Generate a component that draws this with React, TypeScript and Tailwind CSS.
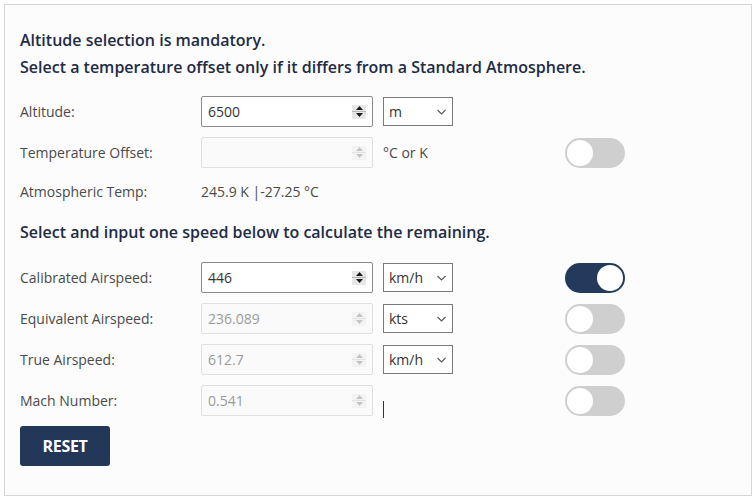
import React from "react";

const font = { fontFamily: '"Open Sans", "Noto Sans", sans-serif' };

function Spinner({ disabled }: { disabled?: boolean }) {
	const arrow = disabled ? "#c4c4c4" : "#1a1a1a";
	return (
		<div
			className={`absolute right-[6px] top-1/2 flex h-[14px] w-[14px] -translate-y-1/2 flex-col ${disabled ? "bg-[#f3f3f3]" : "bg-[#e6e6e6]"}`}
		>
			<div className="flex flex-1 items-center justify-center">
				<svg width="7" height="4" viewBox="0 0 7 4">
					<path d="M0 4 L3.5 0 L7 4 Z" fill={arrow} />
				</svg>
			</div>
			<div className={`h-px ${disabled ? "bg-[#e2e2e2]" : "bg-[#b5b5b5]"}`} />
			<div className="flex flex-1 items-center justify-center">
				<svg width="7" height="4" viewBox="0 0 7 4">
					<path d="M0 0 L3.5 4 L7 0 Z" fill={arrow} />
				</svg>
			</div>
		</div>
	);
}

function NumberBox({ value, disabled }: { value: string; disabled?: boolean }) {
	return (
		<div
			className={`relative flex h-[31px] w-[172px] items-center rounded-[2px] border pl-[6px] text-[14px] ${disabled ? "border-[#e0e0e0] bg-[#fafafa] text-[#9a9a9a]" : "border-[#8a8a8a] bg-white text-[#333]"}`}
		>
			{value}
			<Spinner disabled={disabled} />
		</div>
	);
}

function UnitSelect({ value }: { value: string }) {
	return (
		<div className="relative flex h-[29px] w-[70px] items-center border border-[#7a7a7a] bg-white pl-[5px] text-[14px] text-[#333]">
			{value}
			<svg
				className="absolute right-[6px] top-1/2 -translate-y-1/2"
				width="9"
				height="6"
				viewBox="0 0 9 6"
			>
				<path d="M0.5 1 L4.5 5 L8.5 1" fill="none" stroke="#555" strokeWidth="1.1" />
			</svg>
		</div>
	);
}

function Toggle({ on }: { on?: boolean }) {
	return (
		<div
			className={`flex h-[30px] w-[60px] items-center rounded-full p-[2px] ${on ? "justify-end bg-[#233a5c]" : "justify-start bg-[#cfcfcf]"}`}
		>
			<div className="h-[26px] w-[26px] rounded-full bg-white" />
		</div>
	);
}

function Row({
	label,
	children,
	unit,
	toggle,
}: {
	label: string;
	children: React.ReactNode;
	unit?: React.ReactNode;
	toggle?: React.ReactNode;
}) {
	return (
		<div className="flex h-[31px] items-center">
			<div className="w-[181px] text-[14px] text-[#4a4a4a]">{label}</div>
			<div className="w-[172px]">{children}</div>
			<div className="ml-[10px] flex w-[70px] items-center">{unit}</div>
			<div className="ml-[112px]">{toggle}</div>
		</div>
	);
}

export default function App() {
	return (
		<div className="min-h-[500px] bg-white p-[4px]" style={font}>
			<div className="h-[492px] w-[748px] border border-[#d6d6d6] bg-[#fcfcfc] px-[15px] pt-[22px]">
				<p className="text-[16px] font-semibold leading-[27px] text-[#1e2b45]">
					Altitude selection is mandatory.
				</p>
				<p className="text-[16px] font-semibold leading-[27px] text-[#1e2b45]">
					Select a temperature offset only if it differs from a Standard Atmosphere.
				</p>

				<div className="mt-[15px] flex flex-col gap-[10px]">
					<Row label="Altitude:" unit={<UnitSelect value="m" />}>
						<NumberBox value="6500" />
					</Row>
					<Row
						label="Temperature Offset:"
						unit={<span className="text-[14px] text-[#4a4a4a]">°C or K</span>}
						toggle={<Toggle />}
					>
						<NumberBox value="" disabled />
					</Row>
					<div className="flex h-[26px] items-center text-[14px] text-[#4a4a4a]">
						<div className="w-[181px]">Atmospheric Temp:</div>
						<div>245.9 K |-27.25 °C</div>
					</div>
				</div>

				<p className="mt-[15px] text-[16px] font-semibold leading-[27px] text-[#1e2b45]">
					Select and input one speed below to calculate the remaining.
				</p>

				<div className="mt-[16px] flex flex-col gap-[10px]">
					<Row label="Calibrated Airspeed:" unit={<UnitSelect value="km/h" />} toggle={<Toggle on />}>
						<NumberBox value="446" />
					</Row>
					<Row label="Equivalent Airspeed:" unit={<UnitSelect value="kts" />} toggle={<Toggle />}>
						<NumberBox value="236.089" disabled />
					</Row>
					<Row label="True Airspeed:" unit={<UnitSelect value="km/h" />} toggle={<Toggle />}>
						<NumberBox value="612.7" disabled />
					</Row>
					<Row
						label="Mach Number:"
						unit={<div className="mt-[18px] h-[17px] w-px bg-[#333]" />}
						toggle={<Toggle />}
					>
						<NumberBox value="0.541" disabled />
					</Row>
				</div>

				<button className="mt-[10px] h-[40px] w-[90px] rounded-[3px] bg-[#233759] text-[16px] font-bold tracking-[-0.3px] text-white">
					RESET
				</button>
			</div>
		</div>
	);
}
